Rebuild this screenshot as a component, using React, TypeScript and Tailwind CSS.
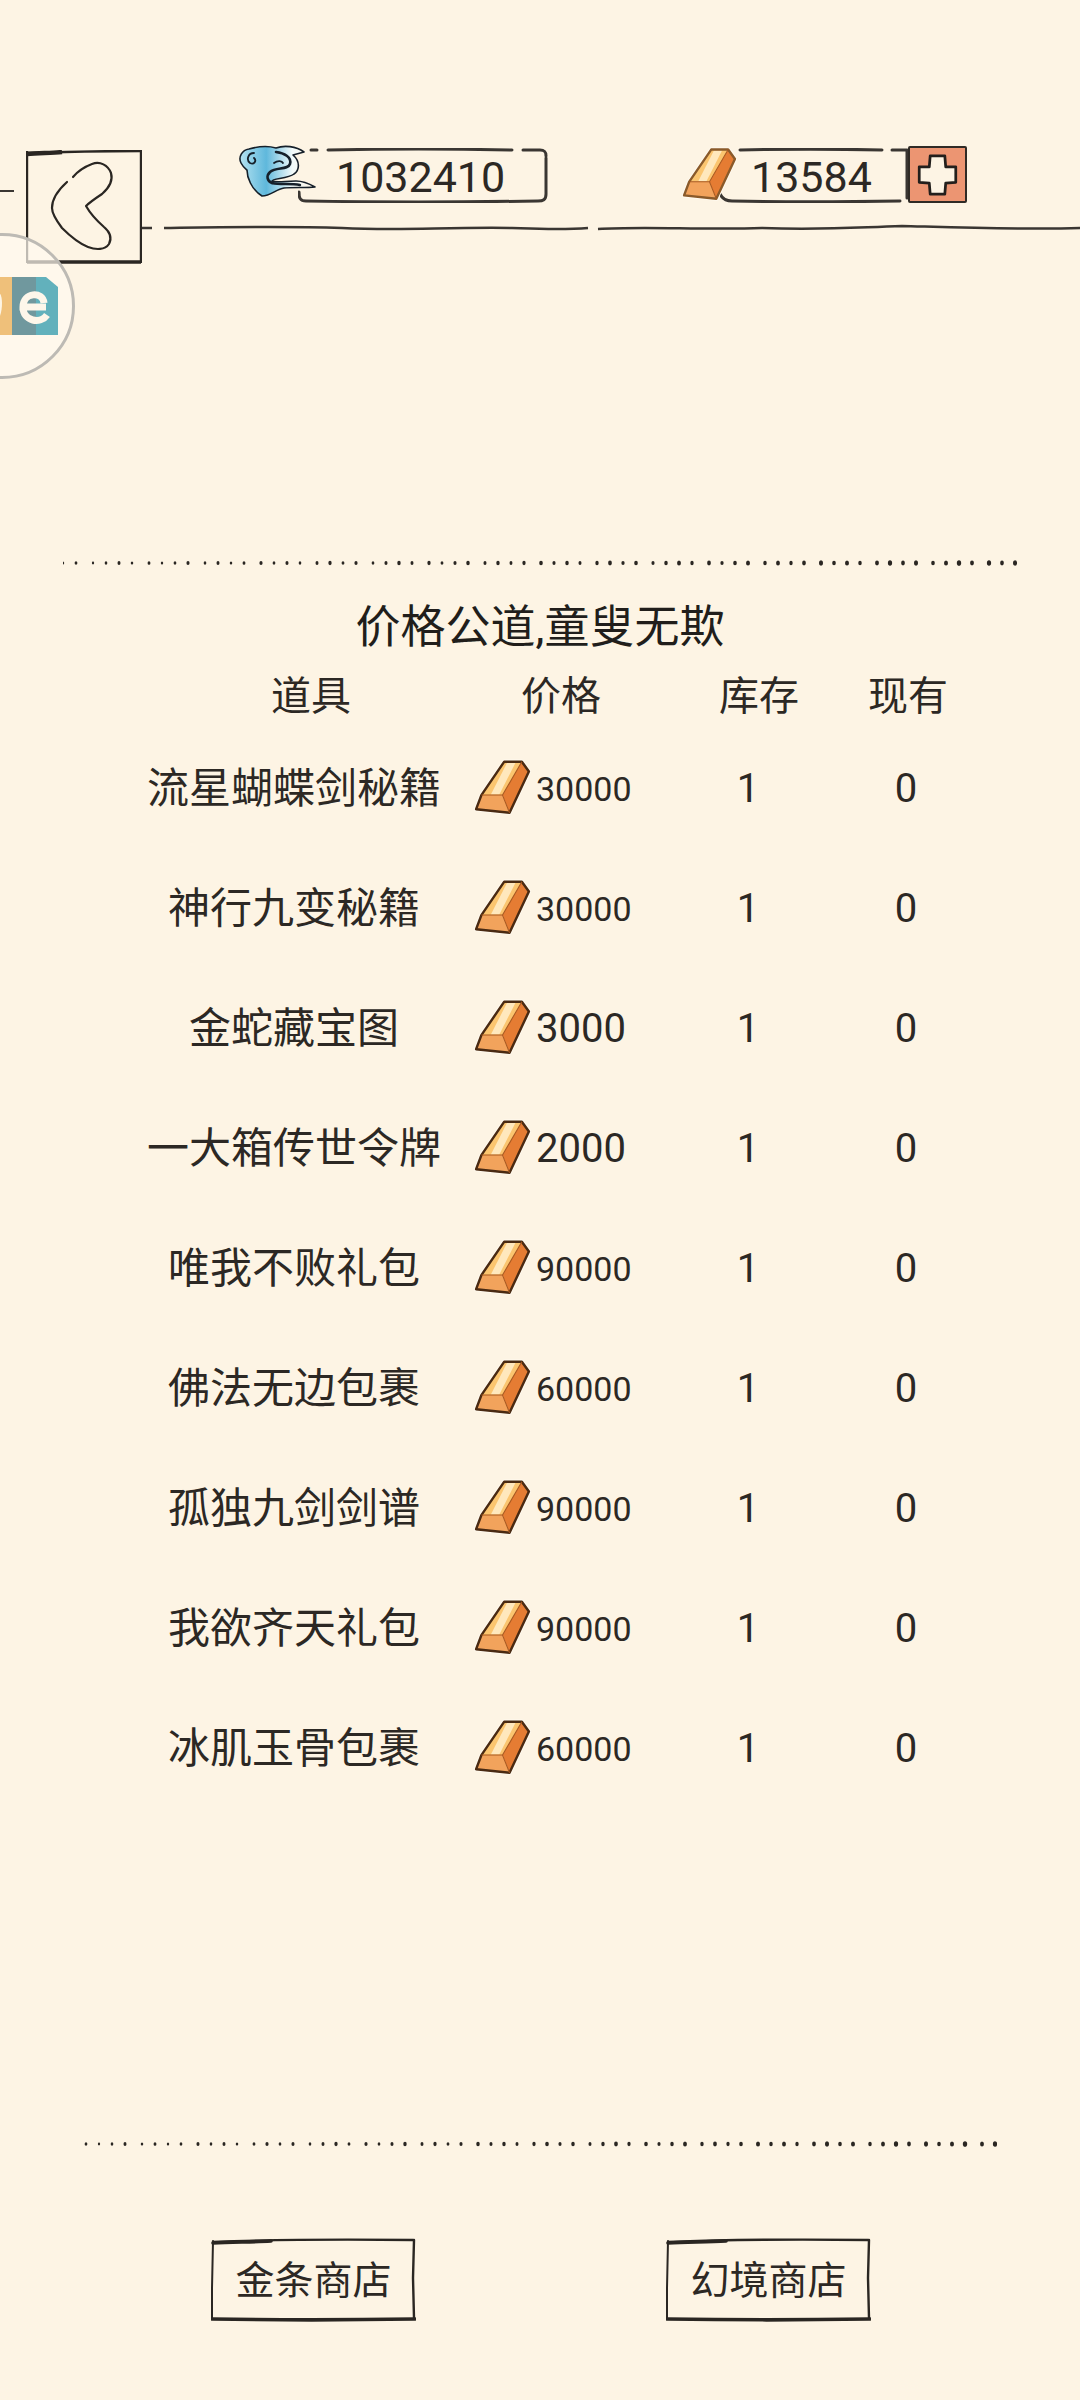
const FONT = 'font-["Roboto","Noto_Sans_CJK_SC",sans-serif]';

const items = [
  { name: "流星蝴蝶剑秘籍", price: "30000" },
  { name: "神行九变秘籍", price: "30000" },
  { name: "金蛇藏宝图", price: "3000" },
  { name: "一大箱传世令牌", price: "2000" },
  { name: "唯我不败礼包", price: "90000" },
  { name: "佛法无边包裹", price: "60000" },
  { name: "孤独九剑剑谱", price: "90000" },
  { name: "我欲齐天礼包", price: "90000" },
  { name: "冰肌玉骨包裹", price: "60000" },
];

function Ingot({ w, h, outline }: { w: number; h: number; outline: string }) {
  return (
    <svg width={w} height={h} viewBox="-6 -2 162 158" className="shrink-0 relative z-10">
      <path d="M80 5L130 5L150 33L95 150L0 140L15 100Z" fill="#fffaf0" stroke="#fffaf0" strokeWidth="12" strokeLinejoin="round" />
      <path d="M80 5L130 5L75 100L15 100Z" fill="#fbc56f" />
      <path d="M88 8L112 8L66 98L42 98Z" fill="#ffe8bd" />
      <path d="M130 5L150 33L95 150L75 100Z" fill="#e57c33" />
      <path d="M15 100L75 100L95 150L0 140Z" fill="#f2a35c" />
      <path d="M80 5L130 5L150 33L95 150L0 140L15 100Z" fill="none" stroke={outline} strokeWidth="7" strokeLinejoin="round" />
      <path d="M15 100L75 100L130 5M75 100L95 150" fill="none" stroke="#a8581f" strokeWidth="3" strokeLinejoin="round" />
    </svg>
  );
}

function Cloud() {
  return (
    <svg width="78" height="52" viewBox="0 0 78 52" className="shrink-0 relative z-10">
      <defs>
        <linearGradient id="cloudFill" x1="0" y1="0" x2="1" y2="0">
          <stop offset="0" stopColor="#b4e2f0" />
          <stop offset="0.35" stopColor="#5fb8dc" />
          <stop offset="0.7" stopColor="#f2fafa" />
          <stop offset="1" stopColor="#fdf4e4" />
        </linearGradient>
      </defs>
      <path d="M11 4C4 5 0 12 3 18C5 22 8 24 9 25C9 32 13 44 24 51C33 51 38 44 46 43C54 42 68 43 77 42C70 38 64 36 58 36C48 36 38 38 34 36C34 33 50 34 56 29C62 25 62 16 55 10L66 7C58 1 46 0 38 3C28 0 18 2 11 4Z" fill="url(#cloudFill)" stroke="#16202a" strokeWidth="1.6" strokeLinejoin="round" />
      <path d="M16 8C10 8 8 15 12 18C16 20 19 16 16 13" fill="none" stroke="#16202a" strokeWidth="1.8" strokeLinecap="round" />
      <path d="M38 7C46 8 54 12 52 19C50 25 38 22 32 27C28 31 29 36 34 38" fill="none" stroke="#16202a" strokeWidth="2.6" strokeLinecap="round" />
      <path d="M34 38C42 40 52 38 62 40" fill="none" stroke="#16202a" strokeWidth="2.4" strokeLinecap="round" />
      <path d="M36 18C40 15 44 16 45 18" fill="none" stroke="#16202a" strokeWidth="1.8" strokeLinecap="round" />
    </svg>
  );
}

function Dots({ w, seed }: { w: number; seed: number }) {
  const count = Math.floor(w / 14);
  return (
    <svg width={w} height="8" viewBox={`0 0 ${w} 8`} className="block">
      {Array.from({ length: count + 1 }, (_, i) => {
        const t = i / count;
        const r = 1.3 + t * 0.9 + ((i * 7 + seed) % 5) * 0.1;
        return <ellipse key={i} cx={i * 14 + ((i * 3 + seed) % 4) - 1} cy={4} rx={r * 0.85} ry={r * 1.1} fill="#2a2622" />;
      })}
    </svg>
  );
}

function ShopButton({ label }: { label: string }) {
  return (
    <div className="relative flex h-[84px] w-[205px] items-center justify-center pt-[3px]">
      <svg width="205" height="84" viewBox="0 0 205 84" className="absolute inset-0" fill="none" stroke="#2a2622" strokeLinecap="round">
        <path d="M2 4C50 2 110 1 202 2" strokeWidth="2.4" />
        <path d="M2 5C20 4 40 4 60 3" strokeWidth="3.6" />
        <path d="M2 3L1 50L1 80" strokeWidth="2" />
        <path d="M203 2L202 40L203 80" strokeWidth="2.4" />
        <path d="M1 81C60 82 140 82 204 81" strokeWidth="3.6" />
      </svg>
      <span className="text-[39px] leading-none text-[#2c2824]">{label}</span>
    </div>
  );
}

function Row({ name, price }: { name: string; price: string }) {
  const small = price.length > 4;
  return (
    <div className="flex h-[120px] items-center pl-[130px]">
      <div className="w-[328px] text-center text-[42px] leading-none text-[#2c2824]">{name}</div>
      <div className="ml-[16px] flex w-[216px] items-center gap-[5px]">
        <div className="mb-[4px]">
          <Ingot w={57} h={56} outline="#4a2a12" />
        </div>
        <span className={small ? "text-[34px] leading-none text-[#2c2824]" : "text-[40px] leading-none text-[#2c2824]"}>{price}</span>
      </div>
      <div className="w-[116px] text-center text-[40px] leading-none text-[#2c2824]">1</div>
      <div className="w-[200px] text-center text-[40px] leading-none text-[#2c2824]">0</div>
    </div>
  );
}

export default function App() {
  return (
    <div className={`relative flex h-[2400px] w-[1080px] flex-col overflow-hidden bg-[#fdf4e4] ${FONT}`}>
      <div className="absolute left-[-71px] top-[233px] z-20 flex h-[146px] w-[146px] items-center justify-end rounded-full border-[3px] border-[#bdbab4] bg-[#fff9ef]/70 pr-[14px]">
        <svg width="70" height="58" viewBox="0 0 70 58">
          <rect x="0" y="0" width="24" height="58" fill="#efc07a" />
          <path d="M0 14C8 10 14 14 14 26C14 38 10 48 0 46Z" fill="#fdf4e4" />
          <path d="M24 0L48 0L48 58L24 58Z" fill="#70989e" />
          <path d="M48 0L58 0L70 10L70 58L48 58Z" fill="#62b1bc" />
          <path d="M58 30L35 30C35 15 55 14 56 26M35 30C35 45 53 47 59 38" fill="none" stroke="#fdf6ea" strokeWidth="7" />
        </svg>
      </div>

      <header className="flex h-[264px] items-start pt-[150px]">
        <div className="flex h-[42px] w-[26px] items-end">
          <div className="h-[2px] w-[14px] bg-[#3a3632]" />
        </div>
        <button className="relative h-[114px] w-[116px] shrink-0">
          <svg width="116" height="114" viewBox="0 0 116 114" className="absolute inset-0" fill="none" stroke="#2a2622">
            <path d="M1 1L1 113M115 0L115 113" strokeWidth="2.4" />
            <path d="M1 3C30 2 80 1 115 1" strokeWidth="2.4" />
            <path d="M1 4C14 3 26 3 36 2" strokeWidth="4.4" />
            <path d="M1 112L115 112" strokeWidth="3.4" />
            <path d="M47 27C52 21 58 17 66 14C74 11 82 15 85 23C87 30 84 37 76 44C70 48 64 52 60 56C64 63 70 70 78 77C84 82 86 88 83 94C79 100 70 100 62 97C52 93 42 84 36 78C30 70 26 64 26 58C26 50 31 41 41 32" strokeWidth="2.2" strokeLinecap="round" strokeLinejoin="round" />
          </svg>
        </button>

        <div className="flex flex-1 flex-col">
          <div className="ml-[96px] mt-[-2px] flex h-[57px] items-start">
            <div className="mt-[-3px]">
              <Cloud />
            </div>
            <div className="relative ml-[-18px] flex h-[55px] w-[250px] items-center pl-[38px] pt-[3px]">
              <svg width="250" height="55" viewBox="0 0 250 55" className="absolute inset-0" fill="none" stroke="#3a3632" strokeLinecap="round">
                <path d="M13 2L19 2M30 2C80 1 160 1 214 2M225 2L242 2C247 2 248 4 248 8" strokeWidth="3" />
                <path d="M248 10L248 46C248 52 245 53 240 53C170 54 70 54 8 53C2 53 1 50 1 44" strokeWidth="3" />
              </svg>
              <span className="relative text-[43px] leading-none text-[#2c2824]">1032410</span>
            </div>
            <div className="ml-[134px] mt-[-1px]">
              <Ingot w={55} h={54} outline="#8a5a2a" />
            </div>
            <div className="relative ml-[-17px] flex h-[55px] w-[188px] items-center pl-[31px] pt-[3px]">
              <svg width="188" height="55" viewBox="0 0 188 55" className="absolute inset-0" fill="none" stroke="#3a3632" strokeLinecap="round">
                <path d="M20 2C60 1 120 1 162 2M172 2L187 2M187 2L187 50" strokeWidth="3" />
                <path d="M180 53C120 54 60 54 12 53C5 53 2 50 0 46" strokeWidth="3" />
              </svg>
              <span className="relative text-[43px] leading-none text-[#2c2824]">13584</span>
            </div>
            <button className="mt-[-2px] flex h-[57px] w-[59px] shrink-0 items-center justify-center rounded-[2px] border-2 border-[#2f2a25] bg-[#ec9572]">
              <svg width="41" height="42" viewBox="0 0 44 46" fill="#fdf4e4" stroke="#231f1c" strokeWidth="3" strokeLinejoin="round">
                <path d="M14 2L30 2L31 14L42 14L42 31L31 32L30 44L14 44L13 32L2 31L2 14L13 14Z" />
              </svg>
            </button>
          </div>
          <svg width="938" height="10" viewBox="0 0 938 10" className="mt-[18px] block" fill="none" stroke="#3a3632" strokeWidth="2.5">
            <path d="M0 5L10 5M22 5C90 4 140 3 200 5C260 8 300 4 370 5C400 6 420 7 446 5M456 6C500 3 560 7 620 5C680 7 700 5 760 3C800 4 880 7 938 5" />
          </svg>
        </div>
      </header>

      <main className="flex flex-1 flex-col">
        <div className="mt-[295px] pl-[63px]">
          <Dots w={954} seed={1} />
        </div>
        <h1 className="mt-[30px] flex h-[60px] items-center justify-center text-[45px] font-normal leading-none text-[#211e1b]">价格公道,童叟无欺</h1>
        <div className="mt-[10px] flex h-[60px] items-center pl-[200px] text-[40px] leading-none text-[#2c2824]">
          <div className="w-[222px] text-center">道具</div>
          <div className="w-[278px] text-center">价格</div>
          <div className="w-[118px] text-center">库存</div>
          <div className="w-[180px] text-center">现有</div>
        </div>
        <div className="mt-[2px] flex flex-col">
          {items.map((it) => (
            <Row key={it.name} name={it.name} price={it.price} />
          ))}
        </div>
        <div className="mt-[331px] pl-[84px]">
          <Dots w={913} seed={3} />
        </div>
        <div className="mt-[90px] flex gap-[250px] pl-[211px]">
          <ShopButton label="金条商店" />
          <ShopButton label="幻境商店" />
        </div>
      </main>
    </div>
  );
}
